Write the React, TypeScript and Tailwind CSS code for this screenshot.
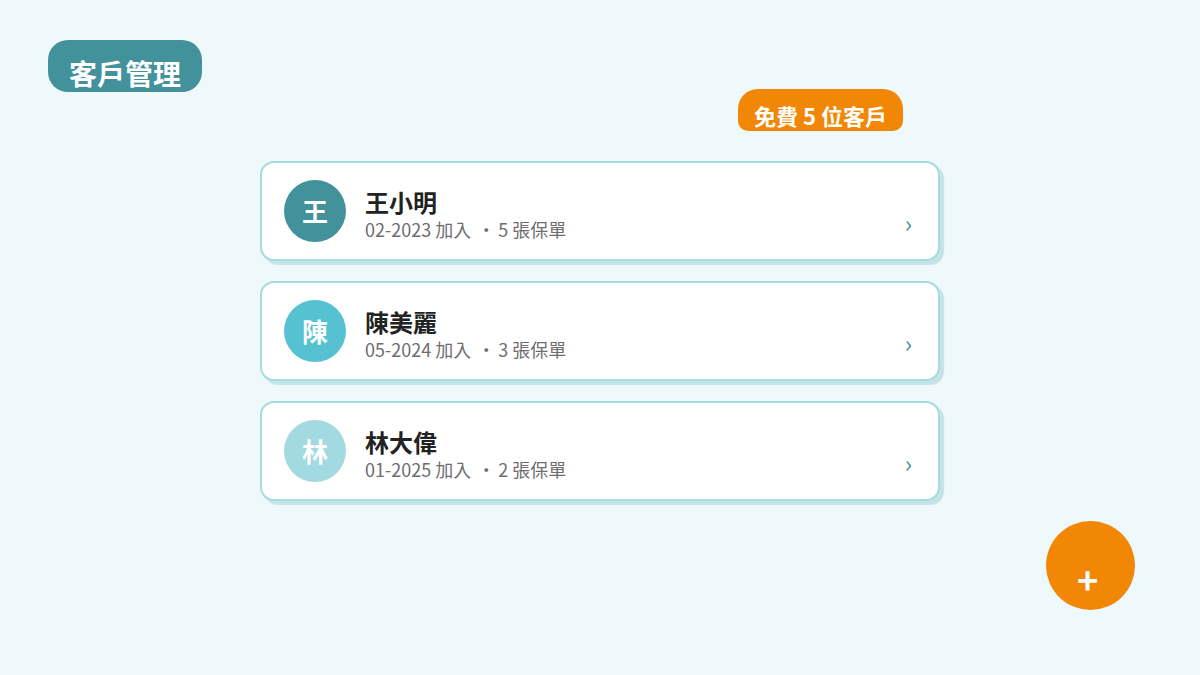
import React from "react";

interface Customer {
  id: number;
  name: string;
  initial: string;
  joined: string;
  policies: number;
  color: string;
}

const customers: Customer[] = [
  { id: 1, name: "王小明", initial: "王", joined: "02-2023", policies: 5, color: "bg-[#42919b]" },
  { id: 2, name: "陳美麗", initial: "陳", joined: "05-2024", policies: 3, color: "bg-[#55c1d1]" },
  { id: 3, name: "林大偉", initial: "林", joined: "01-2025", policies: 2, color: "bg-[#a3d9e0]" },
];

const CustomerCard: React.FC<{ customer: Customer }> = ({ customer }) => {
  return (
    <div className="flex items-center h-[100px] w-[680px] pl-[22px] pr-[26px] bg-white border-2 border-[#a6dbe1] rounded-[14px] shadow-[4px_4px_1px_#c4e3e7]">
      <div
        className={`${customer.color} w-[62px] h-[62px] rounded-full flex items-center justify-center text-white text-[26px] font-bold leading-none`}
      >
        {customer.initial}
      </div>
      <div className="ml-[19px] pt-[6px] flex-1">
        <p className="text-[24px] leading-[28px] font-bold text-[#222]">{customer.name}</p>
        <p className="mt-[1px] text-[18px] leading-[24px] font-normal text-[#6e6e6e]">
          {customer.joined} 加入<span className="ml-[6px] mr-[3px]">·</span>
          {customer.policies} 張保單
        </p>
      </div>
      <span className="mt-[24px] text-[24px] leading-none text-[#42919b]">›</span>
    </div>
  );
};

const App: React.FC = () => {
  return (
    <div
      className="relative min-h-screen bg-[#eff8fb] px-12 pt-10"
      style={{ fontFamily: '"Noto Sans CJK TC", "Noto Sans", sans-serif' }}
    >
      <div className="flex">
        <div className="bg-[#42919b] rounded-[20px] px-[21px] pt-[19px] pb-[5px] h-[52px]">
          <h1 className="text-[28px] leading-[28px] font-bold text-white">客戶管理</h1>
        </div>
      </div>

      <div className="flex -mt-[3px] ml-[690px]">
        <span className="bg-[#f28705] rounded-t-[20px] rounded-b-[10px] px-[16px] pt-[15px] pb-[5px] h-[42px] text-[22px] leading-[22px] font-bold text-white">
          免費 5 位客戶
        </span>
      </div>

      <div className="mt-[30px] flex flex-col items-center gap-5">
        {customers.map((customer) => (
          <CustomerCard key={customer.id} customer={customer} />
        ))}
      </div>

      <button className="absolute right-[65px] bottom-[65px] w-[89px] h-[89px] rounded-full bg-[#f28705] flex items-center justify-center pt-6 pr-[6px] text-white text-[36px] font-bold leading-none">
        +
      </button>
    </div>
  );
};

export default App;
